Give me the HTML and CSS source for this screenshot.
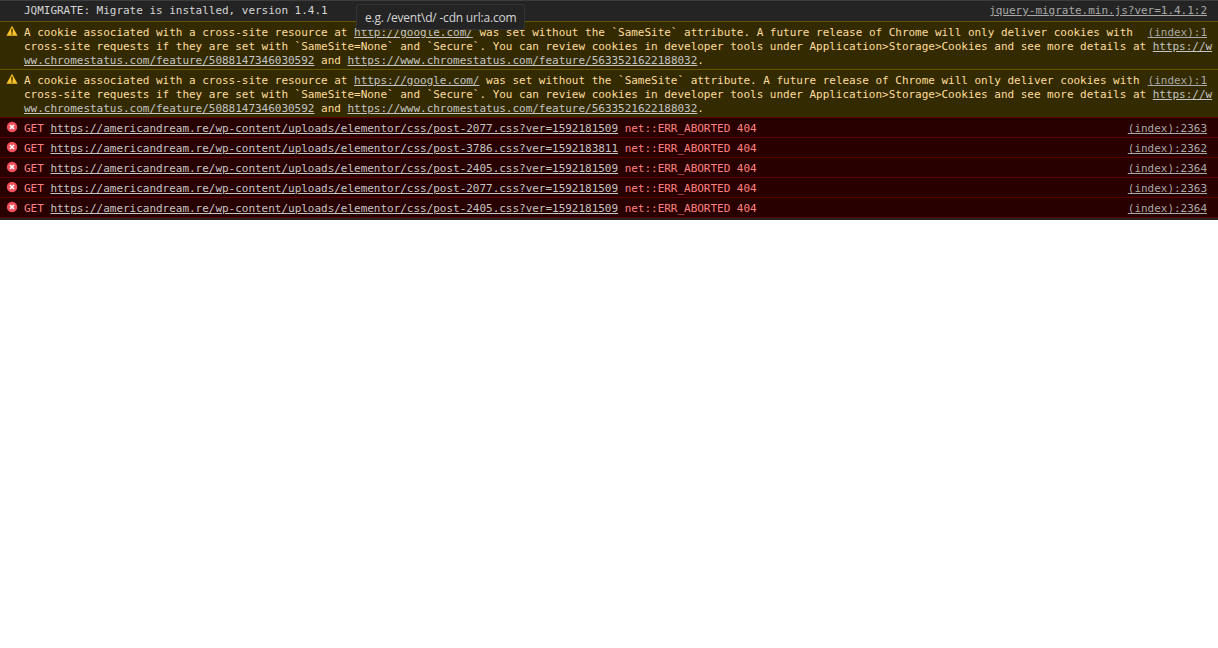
FILE: index.html
```html
<!DOCTYPE html>
<html lang="en">
<head>
<meta charset="utf-8">
<title>Console</title>
<link rel="stylesheet" href="styles.css">
</head>
<body>
<main class="console">
  <div class="row info">
    <div class="msg">JQMIGRATE: Migrate is installed, version 1.4.1</div>
    <a class="src">jquery-migrate.min.js?ver=1.4.1:2</a>
  </div>
  <div class="row warn">
    <svg class="ico" viewBox="0 0 12 12"><path class="tri" d="M6 .8 11.6 10.8H.4Z"/><path class="mark" d="M5.3 3.8h1.4v3.9H5.3ZM5.3 8.4h1.4v1.4H5.3Z"/></svg>
    <div class="msg"><a class="src">(index):1</a>A cookie associated with a cross-site resource at <a>http://google.com/</a> was set without the `SameSite` attribute. A future release of Chrome will only deliver cookies with cross-site requests if they are set with `SameSite=None` and `Secure`. You can review cookies in developer tools under Application&gt;Storage&gt;Cookies and see more details at <a>https://www.chromestatus.com/feature/5088147346030592</a> and <a>https://www.chromestatus.com/feature/5633521622188032</a>.</div>
  </div>
  <div class="row warn">
    <svg class="ico" viewBox="0 0 12 12"><path class="tri" d="M6 .8 11.6 10.8H.4Z"/><path class="mark" d="M5.3 3.8h1.4v3.9H5.3ZM5.3 8.4h1.4v1.4H5.3Z"/></svg>
    <div class="msg"><a class="src">(index):1</a>A cookie associated with a cross-site resource at <a>https://google.com/</a> was set without the `SameSite` attribute. A future release of Chrome will only deliver cookies with cross-site requests if they are set with `SameSite=None` and `Secure`. You can review cookies in developer tools under Application&gt;Storage&gt;Cookies and see more details at <a>https://www.chromestatus.com/feature/5088147346030592</a> and <a>https://www.chromestatus.com/feature/5633521622188032</a>.</div>
  </div>
  <div class="row err">
    <svg class="ico" viewBox="0 0 12 12"><circle class="disc" cx="6" cy="6" r="5.2"/><path class="x" d="M4 4 8 8M8 4 4 8"/></svg>
    <div class="msg">GET <a>https://americandream.re/wp-content/uploads/elementor/css/post-2077.css?ver=1592181509</a> net::ERR_ABORTED 404</div>
    <a class="src">(index):2363</a>
  </div>
  <div class="row err">
    <svg class="ico" viewBox="0 0 12 12"><circle class="disc" cx="6" cy="6" r="5.2"/><path class="x" d="M4 4 8 8M8 4 4 8"/></svg>
    <div class="msg">GET <a>https://americandream.re/wp-content/uploads/elementor/css/post-3786.css?ver=1592183811</a> net::ERR_ABORTED 404</div>
    <a class="src">(index):2362</a>
  </div>
  <div class="row err">
    <svg class="ico" viewBox="0 0 12 12"><circle class="disc" cx="6" cy="6" r="5.2"/><path class="x" d="M4 4 8 8M8 4 4 8"/></svg>
    <div class="msg">GET <a>https://americandream.re/wp-content/uploads/elementor/css/post-2405.css?ver=1592181509</a> net::ERR_ABORTED 404</div>
    <a class="src">(index):2364</a>
  </div>
  <div class="row err">
    <svg class="ico" viewBox="0 0 12 12"><circle class="disc" cx="6" cy="6" r="5.2"/><path class="x" d="M4 4 8 8M8 4 4 8"/></svg>
    <div class="msg">GET <a>https://americandream.re/wp-content/uploads/elementor/css/post-2077.css?ver=1592181509</a> net::ERR_ABORTED 404</div>
    <a class="src">(index):2363</a>
  </div>
  <div class="row err">
    <svg class="ico" viewBox="0 0 12 12"><circle class="disc" cx="6" cy="6" r="5.2"/><path class="x" d="M4 4 8 8M8 4 4 8"/></svg>
    <div class="msg">GET <a>https://americandream.re/wp-content/uploads/elementor/css/post-2405.css?ver=1592181509</a> net::ERR_ABORTED 404</div>
    <a class="src">(index):2364</a>
  </div>
</main>
<div class="tip">e.g. /event\d/ -cdn url:a.com</div>
</body>
</html>
```
FILE: styles.css
```css
html, body {
  margin: 0;
  background: #fff;
}
.console {
  background: #242424;
  border-top: 1px solid #3d3d3d;
  padding-bottom: 2px;
  font: 11px/14px "DejaVu Sans Mono", monospace;
  letter-spacing: -0.022px;
}
.row {
  position: relative;
  box-sizing: border-box;
  padding: 4px 11px 2px 24px;
  display: flex;
  justify-content: space-between;
}
.msg {
  overflow-wrap: break-word;
  flex: 1;
  min-width: 0;
}
a {
  text-decoration: underline;
  color: inherit;
}
.msg a {
  word-break: break-all;
}
.src {
  color: #a8a8a8;
  white-space: nowrap;
}
.msg .src {
  float: right;
  margin-left: 8px;
  position: relative;
}
.ico {
  position: absolute;
  left: 6px;
  width: 12px;
  height: 12px;
}
.info {
  height: 20px;
  padding-top: 3px;
  color: #d5d5d5;
}
.warn {
  height: 48px;
  padding-right: 5px;
  background: #332a00;
  border-top: 1px solid #665500;
  color: #ffdd9e;
}
.warn .ico {
  top: 3px;
}
.warn .msg a {
  color: #c4c4c4;
}
.warn .msg .src {
  color: #a8a8a8;
  margin-right: 6px;
}
.warn + .err {
  height: 21px;
  border-top: 1px solid #5c0000;
}
.err {
  height: 20px;
  background: #290000;
  border-bottom: 1px solid #5c0000;
  color: #ff8080;
}
.err .ico {
  top: 3px;
}
.err .msg a {
  color: #c4c4c4;
}
.tri {
  fill: #fbc02d;
}
.mark {
  fill: #3a3000;
}
.disc {
  fill: #f0505c;
}
.x {
  stroke: #fff;
  stroke-width: 1.6;
  fill: none;
}
.tip {
  position: absolute;
  left: 356px;
  top: 4px;
  box-sizing: border-box;
  width: 169px;
  height: 26px;
  padding: 0 8px;
  background: #242424;
  border: 1px solid #333;
  border-radius: 2px;
  color: #d5d5d5;
  font: 12px/26px "Open Sans", sans-serif;
  letter-spacing: -0.2px;
  white-space: nowrap;
}
```
